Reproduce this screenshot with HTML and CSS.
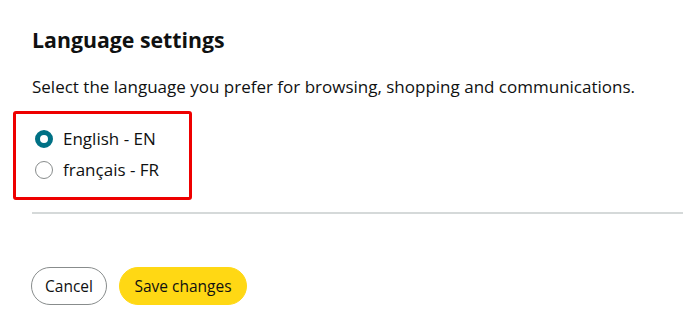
FILE: index.html
```html
<!DOCTYPE html>
<html lang="en">
<head>
<meta charset="utf-8">
<link rel="stylesheet" href="styles.css">
</head>
<body>
<div class="page">
  <h1 class="title">Language settings</h1>
  <p class="desc">Select the language you prefer for browsing, shopping and communications.</p>
  <div class="options">
    <label class="option"><span class="radio checked"></span><span>English - EN</span></label>
    <label class="option"><span class="radio"></span><span>français - FR</span></label>
  </div>
  <hr class="sep">
  <div class="actions">
    <button class="btn btn-cancel">Cancel</button>
    <button class="btn btn-save">Save changes</button>
  </div>
</div>
</body>
</html>
```
FILE: styles.css
```css
html, body {
  margin: 0;
  padding: 0;
  background: #fff;
}
body {
  font-family: "Open Sans", "Noto Sans", sans-serif;
  color: #0f1111;
}
.page {
  padding: 26px 0 0 31px;
}
.title {
  margin: 0 0 0 1px;
  font-size: 21.3px;
  font-weight: 700;
  line-height: 28px;
}
.desc {
  margin: 22px 0 0 1px;
  font-size: 17px;
  line-height: 22px;
}
.options {
  margin: 13px 0 0 -18px;
  width: 173px;
  border: 3px solid #e00;
  border-radius: 3px;
  padding: 9px 0 12px 0;
}
.option {
  display: flex;
  align-items: center;
  height: 31px;
  padding-left: 19px;
  font-size: 17px;
  gap: 10px;
}
.radio {
  width: 18px;
  height: 18px;
  box-sizing: border-box;
  border-radius: 50%;
  border: 1px solid #888c8c;
  background: #fff;
}
.radio.checked {
  border: 5px solid #007185;
  background: #fff;
}
.sep {
  margin: 12px 0 0 1px;
  border: 0;
  height: 2px;
  background: #d5d9d9;
}
.actions {
  display: flex;
  gap: 12px;
  margin-top: 53px;
}
.btn {
  font-family: inherit;
  font-size: 15.5px;
  height: 38px;
  border-radius: 19px;
  padding: 0 13px;
  color: #0f1111;
  cursor: pointer;
}
.btn-cancel {
  background: #fff;
  border: 1px solid #888c8c;
}
.btn-save {
  background: #ffd814;
  border: 1px solid #ffd814;
  padding: 0 14.5px;
}
```
